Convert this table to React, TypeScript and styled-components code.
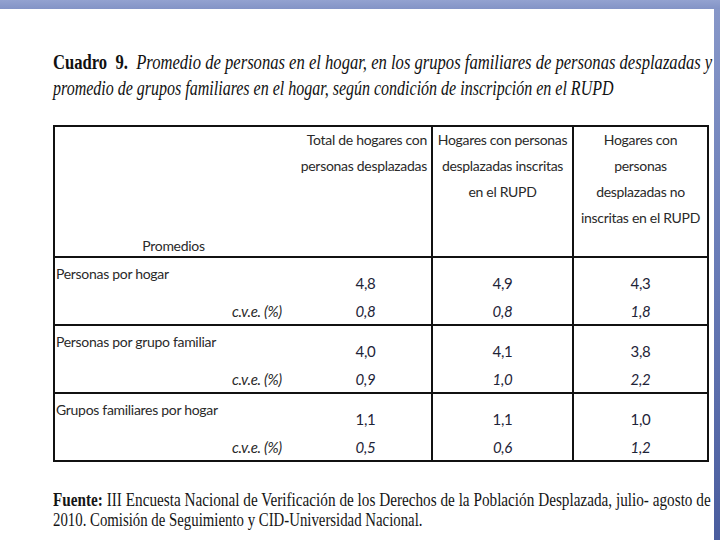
import React from "react";
import styled, { createGlobalStyle } from "styled-components";

const Global = createGlobalStyle`
  html, body { margin: 0; padding: 0; background: #ffffff; }
  body { width: 720px; height: 540px; overflow: hidden; }
`;

const Page = styled.div`
  display: grid;
  grid-template-columns: 714px 6px;
  grid-template-rows: 9px 531px;
  width: 720px;
  height: 540px;
  background: #ffffff;
`;

const TopBar = styled.div`
  grid-column: 1 / 3;
  background: linear-gradient(180deg, #93a2d0 0%, #8394c6 100%);
`;

const SideBar = styled.div`
  grid-column: 2;
  grid-row: 2;
  background: linear-gradient(180deg, #8797c8 0%, #6a7db8 45%, #4a5d9e 100%);
`;

const Content = styled.div`
  grid-column: 1;
  grid-row: 2;
  padding: 40px 0 0 53px;
  display: flex;
  flex-direction: column;
  overflow: hidden;
`;

const Line = styled.div<{ $scale: number }>`
  white-space: nowrap;
  transform: scaleX(${(p) => p.$scale});
  transform-origin: left center;
`;

const Title = styled.div`
  font-family: "Liberation Serif", "Times New Roman", serif;
  font-size: 20px;
  line-height: 26px;
  color: #111111;
  font-style: italic;
`;

const Strong = styled.b`
  font-weight: 700;
  font-style: normal;
`;

const Table = styled.div`
  margin-top: 24px;
  width: 656px;
  box-sizing: border-box;
  border: 2px solid #111;
  font-family: Lato, "Liberation Sans", sans-serif;
  font-size: 14px;
  letter-spacing: -0.3px;
  color: #2a2a2a;
  display: flex;
  flex-direction: column;
`;

const HeaderRow = styled.div`
  display: grid;
  grid-template-columns: 173px 72px 131px 141px 135px;
  height: 129px;
`;

const HeadCell = styled.div<{ $divider?: boolean; $align: "left" | "right" | "center" }>`
  border-left: ${(p) => (p.$divider ? "2px solid #111" : "none")};
  text-align: ${(p) => p.$align};
  white-space: nowrap;
  line-height: 26px;
  padding-top: 0px;
  padding-right: ${(p) => (p.$align === "right" ? "4px" : "0")};
`;

const CornerCell = styled.div`
  grid-column: 1 / 3;
  display: flex;
  align-items: flex-end;
  justify-content: center;
  padding-right: 8px;
  line-height: 20px;
`;

const Group = styled.div`
  display: grid;
  grid-template-columns: 173px 72px 131px 141px 135px;
  grid-template-rows: 40px 26px;
  border-top: 2px solid #111;
`;

const Label = styled.div`
  grid-column: 1 / 3;
  grid-row: 1;
  padding: 6px 0 0 1px;
  line-height: 20px;
  white-space: nowrap;
`;

const Cve = styled.div`
  grid-column: 2;
  grid-row: 2;
  font-style: italic;
  font-size: 15px;
  line-height: 20px;
  padding-left: 4px;
  white-space: nowrap;
  display: flex;
  align-items: center;
`;

const Value = styled.div<{ $col: number; $row: number; $italic?: boolean; $divider?: boolean }>`
  grid-column: ${(p) => p.$col};
  grid-row: ${(p) => p.$row};
  border-left: ${(p) => (p.$divider ? "2px solid #111" : "none")};
  display: flex;
  justify-content: center;
  align-items: ${(p) => (p.$row === 1 ? "flex-end" : "center")};
  padding-bottom: ${(p) => (p.$row === 1 ? "5px" : "0")};
  line-height: 20px;
  font-size: 15px;
  font-style: ${(p) => (p.$italic ? "italic" : "normal")};
  color: #1e2438;
`;

const Source = styled.div`
  margin-top: 28px;
  font-family: "Liberation Serif", "Times New Roman", serif;
  font-size: 18px;
  line-height: 20px;
  color: #151515;
`;

type Row = { label: string; values: string[]; cve: string[] };

const rows: Row[] = [
  { label: "Personas por hogar", values: ["4,8", "4,9", "4,3"], cve: ["0,8", "0,8", "1,8"] },
  { label: "Personas por grupo familiar", values: ["4,0", "4,1", "3,8"], cve: ["0,9", "1,0", "2,2"] },
  { label: "Grupos familiares por hogar", values: ["1,1", "1,1", "1,0"], cve: ["0,5", "0,6", "1,2"] },
];

export default function App() {
  return (
    <>
      <Global />
      <Page>
        <TopBar />
        <Content>
          <Title>
            <Line $scale={0.83}>
              <Strong>Cuadro&nbsp; 9.</Strong>&nbsp; Promedio de personas en el hogar, en los grupos familiares de personas desplazadas y
            </Line>
            <Line $scale={0.8}>promedio de grupos familiares en el hogar, según condición de inscripción en el RUPD</Line>
          </Title>
          <Table>
            <HeaderRow>
              <CornerCell>Promedios</CornerCell>
              <HeadCell $align="right">
                Total de hogares con
                <br />
                personas desplazadas
              </HeadCell>
              <HeadCell $align="center" $divider>
                Hogares con personas
                <br />
                desplazadas inscritas
                <br />
                en el RUPD
              </HeadCell>
              <HeadCell $align="center" $divider>
                Hogares con
                <br />
                personas
                <br />
                desplazadas no
                <br />
                inscritas en el RUPD
              </HeadCell>
            </HeaderRow>
            {rows.map((r) => (
              <Group key={r.label}>
                <Label>{r.label}</Label>
                <Cve>c.v.e. (%)</Cve>
                {r.values.map((v, i) => (
                  <Value key={"v" + i} $col={i + 3} $row={1} $divider={i > 0}>
                    {v}
                  </Value>
                ))}
                {r.cve.map((v, i) => (
                  <Value key={"c" + i} $col={i + 3} $row={2} $italic $divider={i > 0}>
                    {v}
                  </Value>
                ))}
              </Group>
            ))}
          </Table>
          <Source>
            <Line $scale={0.846}>
              <Strong>Fuente:</Strong> III Encuesta Nacional de Verificación de los Derechos de la Población Desplazada, julio- agosto de
            </Line>
            <Line $scale={0.823}>2010. Comisión de Seguimiento y CID-Universidad Nacional.</Line>
          </Source>
        </Content>
        <SideBar />
      </Page>
    </>
  );
}
